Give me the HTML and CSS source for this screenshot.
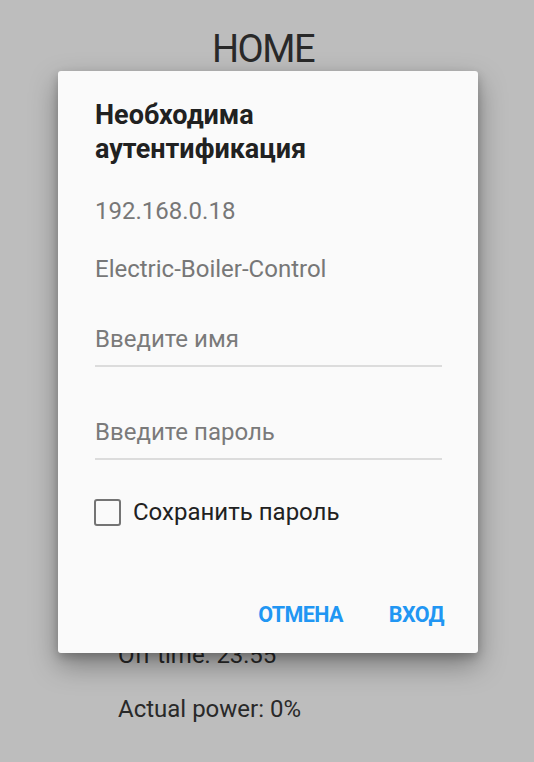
FILE: index.html
```html
<!DOCTYPE html>
<html lang="ru">
<head>
<meta charset="utf-8">
<title>HOME</title>
<link rel="stylesheet" href="styles.css">
</head>
<body>
<main class="page">
  <h1 class="page-title">HOME</h1>
  <ul class="readings">
    <li>Off time: 23:55</li>
    <li>Actual power: 0%</li>
  </ul>
</main>
<div class="scrim"></div>
<div class="dialog" role="dialog">
  <h2 class="dialog-title">Необходима аутентификация</h2>
  <p class="dialog-info host">192.168.0.18</p>
  <p class="dialog-info realm">Electric-Boiler-Control</p>
  <input class="field user" type="text" placeholder="Введите имя">
  <input class="field pass" type="password" placeholder="Введите пароль">
  <label class="check">
    <span class="box"></span>
    <span class="check-label">Сохранить пароль</span>
  </label>
  <div class="actions">
    <button class="btn">ОТМЕНА</button>
    <button class="btn">ВХОД</button>
  </div>
</div>
</body>
</html>
```
FILE: styles.css
```css
* { box-sizing: border-box; }
html, body { margin: 0; padding: 0; }
body {
  width: 534px;
  height: 762px;
  overflow: hidden;
  background: #ffffff;
  font-family: Roboto, "Noto Sans", sans-serif;
  color: #383838;
  position: relative;
}
.page {
  display: flex;
  flex-direction: column;
  align-items: center;
  padding-top: 27px;
}
.page-title {
  margin: 0 8px 0 0;
  font-size: 38px;
  font-weight: 400;
  line-height: 44px;
  letter-spacing: -1.5px;
}
.readings {
  list-style: none;
  margin: 570px 0 0 118px;
  padding: 0;
  align-self: flex-start;
  display: flex;
  flex-direction: column;
  gap: 26px;
  font-size: 24px;
  line-height: 28px;
}
.scrim {
  position: absolute;
  inset: 0;
  background: rgba(0, 0, 0, 0.26);
}
.dialog {
  position: absolute;
  left: 58px;
  top: 71px;
  width: 420px;
  height: 582px;
  background: #fafafa;
  border-radius: 3px;
  box-shadow: 0 12px 28px rgba(0, 0, 0, 0.35), 0 4px 10px rgba(0, 0, 0, 0.2);
  padding: 27px 36px 0 37px;
  display: flex;
  flex-direction: column;
}
.dialog-title {
  margin: 0;
  font-size: 27px;
  font-weight: 700;
  line-height: 34px;
  color: #212121;
}
.dialog-info {
  margin: 0;
  font-size: 24px;
  line-height: 28px;
  color: #777777;
}
.host { margin-top: 31px; }
.realm { margin-top: 30px; }
.field {
  display: block;
  width: 100%;
  height: 42px;
  border: 0;
  border-bottom: 2px solid #dcdcdc;
  background: transparent;
  font-family: inherit;
  font-size: 24px;
  line-height: 28px;
  padding: 0 0 12px 0;
  margin: 0;
  outline: none;
}
.field::placeholder { color: #7a7a7a; }
.user { margin-top: 42px; }
.pass { margin-top: 51px; }
.check {
  display: flex;
  align-items: center;
  gap: 12px;
  margin-top: 38px;
  height: 28px;
  margin-left: -1px;
}
.box {
  width: 27px;
  height: 27px;
  border: 2.5px solid #747474;
  border-radius: 3px;
}
.check-label {
  font-size: 24px;
  line-height: 28px;
  color: #212121;
}
.actions {
  margin-top: auto;
  margin-bottom: 17px;
  margin-right: -10px;
  display: flex;
  justify-content: flex-end;
  gap: 30px;
}
.btn {
  border: 0;
  background: transparent;
  font-family: inherit;
  font-weight: 700;
  font-size: 21.5px;
  line-height: 26px;
  letter-spacing: -0.6px;
  color: #2196f3;
  padding: 8px 8px;
}
```
